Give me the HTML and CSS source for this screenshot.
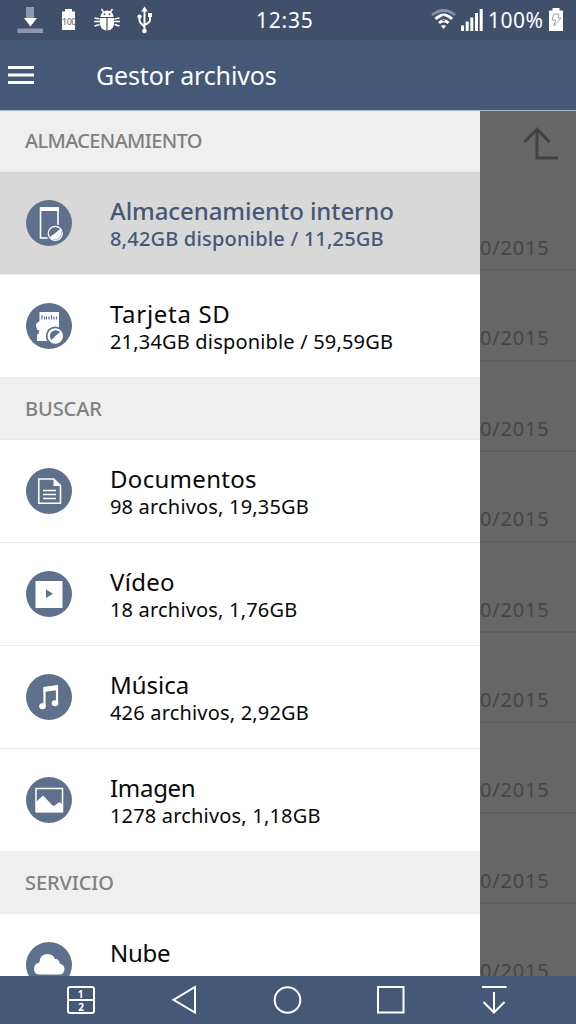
FILE: index.html
```html
<!DOCTYPE html>
<html lang="es">
<head>
<meta charset="utf-8">
<title>Gestor archivos</title>
<link rel="stylesheet" href="styles.css">
</head>
<body>
<div class="status">
  <svg class="status-icons" width="170" height="40" viewBox="0 0 170 40">
    <path d="M26 7h8v11h-8z" fill="#8b9ab0"/><path d="M24 18h13l-6.500 8.500z" fill="#fff"/><path d="M17.500 28.500H43V33H17.500z" fill="#8b9ab0"/>
    <path d="M65 9h7v2.500h3V30H62V11.500h3z" fill="#fff"/>
    <text x="69" y="25" text-anchor="middle" class="battery-num">100</text>
    <g fill="#fff"><path d="M100.500 17a6.500 6.500 0 0 1 13 0zM100 18h6.400v12.500q-6.400-1-6.400-7zM107.600 18h6.400v5.500q0 6-6.400 7z"/></g>
    <path d="M103.500 12l-2-3M110.500 12l2-3M94.500 18l5 1M94 21.500h6M94.500 26l5-1.500M119.500 18l-5 1M120 21.500h-6M119.500 26l-5-1.500" stroke="#fff" stroke-width="1.500"/>
    <circle cx="104.500" cy="14.200" r=".9" fill="#40506a"/><circle cx="109.500" cy="14.200" r=".9" fill="#40506a"/>
    <g stroke="#fff" stroke-width="2" fill="none"><path d="M144.500 10v22M139.500 17v3q0 3 5 6.500M150 16v4q0 2.500-5.500 5"/></g>
    <path d="M144.500 6.500l3.300 5h-6.600zM148 13h4v4h-4z" fill="#fff"/><circle cx="139.500" cy="16.500" r="2.100" fill="#fff"/><circle cx="144.500" cy="31" r="2.300" fill="#fff"/>
  </svg>
  <span class="clock">12:35</span>
  <div class="status-right">
    <svg width="56" height="40" viewBox="0 0 56 40">
      <path d="M2 15q12-9 23 0" stroke="#8492a8" stroke-width="2.800" fill="none"/>
      <path d="M5.500 19q8.500-8 16.500 0M9 23q5-4.500 9.500 0" stroke="#fff" stroke-width="3" fill="none"/><path d="M11 26q2.500-2 5 0l-2.500 3z" fill="#fff"/><path d="M11.500 16.300h4M12 20.600h3" stroke="#555" stroke-width="1"/>
      <path d="M31 25.500h3V31h-3zM35.700 21.500h3V31h-3zM40.300 17.500h3V31h-3zM45 13h3v18h-3zM49.700 9h3v22h-3z" fill="#fff"/>
    </svg>
    <span class="percent">100%</span>
    <svg class="charge" width="16" height="40" viewBox="0 0 16 40"><path d="M4.500 8h7v2.500H15V31H1V10.500h3.500z" fill="#fff"/><path d="M6 14h5l-1 4h3l-7 8 1.500-6H4z" fill="#fff" stroke="#aaa4a0" stroke-width="1"/></svg>
  </div>
</div>
<header class="appbar">
  <svg width="26" height="18" viewBox="0 0 26 18"><path d="M0 1.500h26M0 9h26M0 16.500h26" stroke="#fff" stroke-width="3"/></svg>
  <h1 class="apptitle">Gestor archivos</h1>
</header>
<main class="content">
  <nav class="drawer">
    <h2 class="section first">ALMACENAMIENTO</h2>
    <div class="item selected">
      <svg class="icon" viewBox="0 0 46 46"><circle cx="23" cy="23" r="23" class="disc"/><rect x="14.500" y="8" width="17.500" height="30" fill="none" stroke="#fff" stroke-width="1.600"/><path d="M14 7.200h19V11H14z" fill="#fff"/><circle cx="29.300" cy="33.300" r="9" class="disc"/><circle cx="29.300" cy="33.300" r="7" fill="none" stroke="#fff" stroke-width="1.300"/><path d="M34 29a6.400 6.400 0 0 1-10 8l5-3.700z" fill="#fff"/></svg>
      <div class="text"><div class="name">Almacenamiento interno</div><div class="info">8,42GB disponible / 11,25GB</div></div>
    </div>
    <div class="item">
      <svg class="icon" viewBox="0 0 46 46"><circle cx="23" cy="23" r="23" class="disc"/><path d="M13.500 9H33v29H11v-6l2-2v-3h-2v-2l-1-1v-3l3.500-3z" fill="#fff"/><path d="M16 12v4.500M18.500 13.500v3M20.500 13.500v3M23 13.500v3M25.500 12v4.500M28 13.500v3M30.500 13.500v3" stroke="#5e708b" stroke-width="1.200"/><circle cx="29.300" cy="33" r="9.500" class="disc"/><circle cx="29.300" cy="33" r="7.800" fill="#fff"/><path d="M29.300 33l-3.800 4a5.500 5.500 0 0 1 8.500-8z" class="disc"/></svg>
      <div class="text"><div class="name wide">Tarjeta SD</div><div class="info">21,34GB disponible / 59,59GB</div></div>
    </div>
    <h2 class="section">BUSCAR</h2>
    <div class="item">
      <svg class="icon" viewBox="0 0 46 46"><circle cx="23" cy="23" r="23" class="disc"/><path d="M12.800 11h15l6.700 6.500v17.800H12.800z" fill="none" stroke="#fff" stroke-width="1.600"/><path d="M27.500 10.500v7.500H35z" fill="#fff"/><path d="M17 22.500h13M17 26.500h13M17 30.500h13" stroke="#fff" stroke-width="1.500"/></svg>
      <div class="text"><div class="name open">Documentos</div><div class="info">98 archivos, 19,35GB</div></div>
    </div>
    <div class="item">
      <svg class="icon" viewBox="0 0 46 46"><circle cx="23" cy="23" r="23" class="disc"/><path d="M9.500 10h27v27h-27z" fill="#fff"/><path d="M20 18.500l7 4.200-7 4.300z" class="disc"/></svg>
      <div class="text"><div class="name open">Vídeo</div><div class="info">18 archivos, 1,76GB</div></div>
    </div>
    <div class="item">
      <svg class="icon" viewBox="0 0 46 46"><circle cx="23" cy="23" r="23" class="disc"/><path d="M18.500 32V14.500l12.500-2V29" fill="none" stroke="#fff" stroke-width="2.200"/><path d="M17.500 13l14.500-2v5L17.500 18z" fill="#fff"/><ellipse cx="16.500" cy="32.300" rx="3.300" ry="3" fill="#fff"/><ellipse cx="29" cy="29.300" rx="3.300" ry="3" fill="#fff"/></svg>
      <div class="text"><div class="name">Música</div><div class="info">426 archivos, 2,92GB</div></div>
    </div>
    <div class="item">
      <svg class="icon" viewBox="0 0 46 46"><circle cx="23" cy="23" r="23" class="disc"/><path d="M10 11.500h26.500v23H10z" fill="none" stroke="#fff" stroke-width="1.500"/><path d="M10 25l7-6.500 9 9.500 2 1 5.500-4 3 2.500v8H10z" fill="#fff"/></svg>
      <div class="text"><div class="name tight">Imagen</div><div class="info">1278 archivos, 1,18GB</div></div>
    </div>
    <h2 class="section">SERVICIO</h2>
    <div class="item">
      <svg class="icon" viewBox="0 0 46 46"><circle cx="23" cy="23" r="23" class="disc"/><path d="M14 32.500q-6 0-6-5.500t5.500-6.500q0-8 7.500-8.500 6 0 8 5 3.500-.5 5 4.500 4.500 1.500 4.500 5.500 0 5.500-6 5.500z" fill="#fff"/></svg>
      <div class="text"><div class="name tight">Nube</div></div>
    </div>
  </nav>
  <section class="behind">
    <div class="toolbar"><svg width="36" height="34" viewBox="0 0 36 34"><path d="M1.500 15L14 2.200 26.500 15M14 3v28h21" fill="none" stroke="#404244" stroke-width="3"/></svg></div>
    <div class="date">0/2015</div><div class="date">0/2015</div><div class="date">0/2015</div>
    <div class="date">0/2015</div><div class="date">0/2015</div><div class="date">0/2015</div>
    <div class="date">0/2015</div><div class="date">0/2015</div><div class="date">0/2015</div>
  </section>
</main>
<footer class="navbar">
  <svg width="576" height="48" viewBox="0 0 576 48" fill="none" stroke="#fff" stroke-width="2">
    <rect x="68" y="11" width="26" height="26" rx="2"/><path d="M68 24h26"/>
    <text x="80.500" y="21.500" class="navnum">1</text><text x="81" y="34.500" class="navnum">2</text>
    <path d="M173.500 23.800L195 11v25.500z"/><circle cx="287.500" cy="24" r="12.800"/><rect x="378" y="11" width="25.500" height="25.500"/>
    <path d="M482 11h24.500M494 16v20M483.500 26L494 36.500 504.500 26"/>
  </svg>
</footer>
</body>
</html>
```
FILE: styles.css
```css
* { box-sizing: border-box; }
body { margin: 0; width: 576px; height: 1024px; overflow: hidden; display: flex; flex-direction: column; font-family: "Noto Sans", sans-serif; background: #455877; }
svg { display: block; flex: none; }
h1, h2 { margin: 0; font-weight: 400; }
.status { height: 40px; flex: none; display: flex; background: #40506a; color: #fff; font-size: 21px; line-height: 40px; letter-spacing: .75px; }
.battery-num { font-size: 9px; fill: #666; letter-spacing: -.5px; }
.clock { width: 260px; flex: none; padding-left: 86px; }
.status-right { flex: none; display: flex; }
.percent { width: 59px; padding-left: 2px; letter-spacing: .5px; }
.charge { margin-left: 3px; }
.appbar { height: 70px; flex: none; display: flex; align-items: center; padding-left: 8px; color: #fff; }
.apptitle { margin-left: 62px; font-size: 25px; line-height: 70px; letter-spacing: -.15px; }
.content { height: 866px; flex: none; display: flex; overflow: hidden; border-top: 1px solid #a9b7cb; background: #666; }
.drawer { width: 480px; flex: none; background: #fff; }
.section { height: 62px; padding-left: 25px; background: #efefef; color: #808080; font-size: 20px; font-weight: 500; line-height: 61px; letter-spacing: -.1px; border-bottom: 1px solid #e8e8e8; }
.section.first { height: 61px; line-height: 60px; letter-spacing: -.65px; }
.item { height: 103px; display: flex; padding: 25px 0 0 25.500px; border-bottom: 1px solid #ebebeb; color: #080808; }
.selected { background: #d8d8d8; color: #455877; font-weight: 500; }
.selected .name { letter-spacing: -.08px; }
.icon { width: 46px; height: 46px; margin-top: 3px; }
.disc { fill: #5e708b; }
.text { margin-left: 38.500px; }
.name { height: 28px; font-size: 24px; line-height: 28px; }
.wide { letter-spacing: .7px; }
.open { letter-spacing: .3px; }
.tight { letter-spacing: -.3px; }
.info { height: 27px; font-size: 20px; line-height: 27px; letter-spacing: .18px; }
.behind { width: 96px; flex: none; color: #464646; font-size: 20px; letter-spacing: .8px; }
.toolbar { height: 70px; padding: 16px 0 0 43px; }
.date { height: 90.4px; padding-top: 52px; line-height: 30px; border-bottom: 2px solid #5e5e5e; }
.navbar { height: 48px; flex: none; }
.navnum { font-size: 10px; font-weight: 700; fill: #fff; stroke: none; text-anchor: middle; }
```
